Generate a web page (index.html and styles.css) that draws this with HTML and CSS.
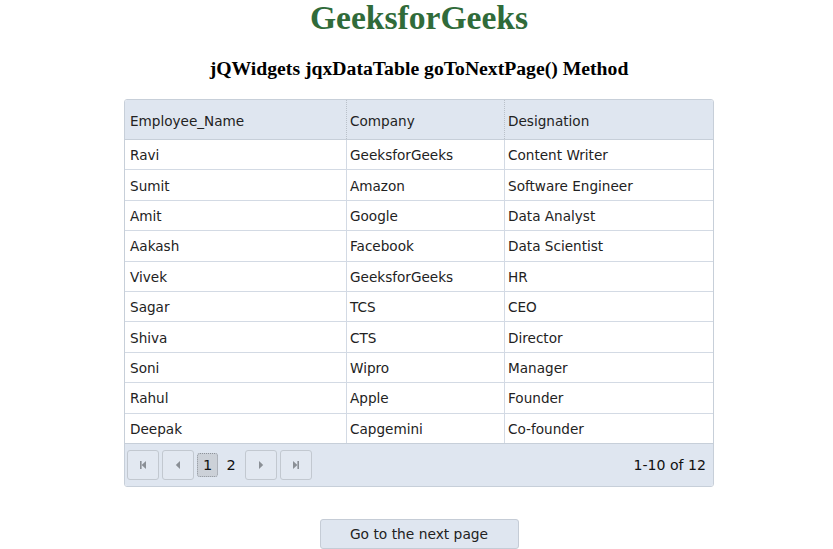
FILE: index.html
```html
<!DOCTYPE html>
<html>
<head>
<meta charset="utf-8">
<title>jqxDataTable goToNextPage</title>
<link rel="stylesheet" href="styles.css">
</head>
<body>
<h1 class="title">GeeksforGeeks</h1>
<h3 class="subtitle">jQWidgets jqxDataTable goToNextPage() Method</h3>
<div class="grid">
  <table class="data">
    <thead>
      <tr><th class="c1">Employee_Name</th><th class="c2">Company</th><th class="c3">Designation</th></tr>
    </thead>
    <tbody>
      <tr><td>Ravi</td><td>GeeksforGeeks</td><td>Content Writer</td></tr>
      <tr><td>Sumit</td><td>Amazon</td><td>Software Engineer</td></tr>
      <tr><td>Amit</td><td>Google</td><td>Data Analyst</td></tr>
      <tr><td>Aakash</td><td>Facebook</td><td>Data Scientist</td></tr>
      <tr><td>Vivek</td><td>GeeksforGeeks</td><td>HR</td></tr>
      <tr><td>Sagar</td><td>TCS</td><td>CEO</td></tr>
      <tr><td>Shiva</td><td>CTS</td><td>Director</td></tr>
      <tr><td>Soni</td><td>Wipro</td><td>Manager</td></tr>
      <tr><td>Rahul</td><td>Apple</td><td>Founder</td></tr>
      <tr><td>Deepak</td><td>Capgemini</td><td>Co-founder</td></tr>
    </tbody>
  </table>
  <div class="pager">
    <div class="pager-left">
      <span class="pbtn"><svg width="8" height="8" viewBox="0 0 8 8"><rect x="1" y="0" width="1.6" height="8" fill="#8a8f96"/><path d="M7 0 L2.6 4 L7 8 Z" fill="#8a8f96"/></svg></span>
      <span class="pbtn"><svg width="8" height="8" viewBox="0 0 8 8"><path d="M6 0 L1.8 4 L6 8 Z" fill="#8a8f96"/></svg></span>
      <span class="pnum active">1</span>
      <span class="pnum">2</span>
      <span class="pbtn after"><svg width="8" height="8" viewBox="0 0 8 8"><path d="M2 0 L6.2 4 L2 8 Z" fill="#8a8f96"/></svg></span>
      <span class="pbtn"><svg width="8" height="8" viewBox="0 0 8 8"><path d="M1 0 L5.4 4 L1 8 Z" fill="#8a8f96"/><rect x="5.4" y="0" width="1.6" height="8" fill="#8a8f96"/></svg></span>
    </div>
    <div class="pager-info">1-10 of 12</div>
  </div>
</div>
<div class="actions">
  <button class="next-btn" type="button">Go to the next page</button>
</div>
</body>
</html>
```

FILE: styles.css
```css
html, body {
  margin: 0;
  padding: 0;
  background: #ffffff;
}
body {
  padding-left: 5px;
}
.title {
  margin: 0;
  text-align: center;
  font-family: "Liberation Serif", "Times New Roman", serif;
  font-size: 33.6px;
  line-height: 36px;
  font-weight: bold;
  color: #306b3a;
}
.subtitle {
  margin: 21px 0 20px 0;
  text-align: center;
  font-family: "Liberation Serif", "Times New Roman", serif;
  font-size: 19.7px;
  line-height: 22px;
  font-weight: bold;
  color: #000;
}
.grid {
  width: 590px;
  box-sizing: border-box;
  margin: 0 auto;
  border: 1px solid #c7cfd9;
  border-radius: 3px;
  overflow: hidden;
  font-family: "DejaVu Sans", Verdana, sans-serif;
  font-size: 13.6px;
  color: #222;
}
.data {
  width: 100%;
  border-collapse: collapse;
  table-layout: fixed;
}
.data th {
  background: #dfe6f0;
  font-weight: normal;
  text-align: left;
  height: 37px;
  padding: 2px 0 0 3px;
  border-bottom: 1px solid #c7cfd9;
  border-left: 1px dotted #b9c0c9;
  color: #222;
}
.data th:first-child, .data td:first-child {
  border-left: none;
  padding-left: 5px;
}
.data .c1 { width: 216px; }
.data .c2 { width: 154px; }
.data td {
  height: 28.4px;
  padding: 1px 0 0 3px;
  border-top: 1px solid #d3dae4;
  border-left: 1px solid #d3dae4;
  background: #fff;
  white-space: nowrap;
}
.data tbody tr:first-child td {
  border-top: none;
}
.pager {
  display: flex;
  align-items: center;
  justify-content: space-between;
  height: 42px;
  background: #dfe6f0;
  border-top: 1px solid #c7cfd9;
  padding: 0 7px 0 2px;
}
.pager-left {
  display: flex;
  align-items: center;
}
.pbtn {
  display: flex;
  align-items: center;
  justify-content: center;
  width: 30px;
  height: 28px;
  border: 1px solid #c2c8d0;
  border-radius: 3px;
  background: #e2e8f1;
  margin-right: 3px;
}
.pnum {
  display: flex;
  align-items: center;
  justify-content: center;
  width: 16px;
  height: 22px;
  margin-left: 5px;
  font-size: 14.5px;
  color: #111;
}
.pnum.active {
  width: 19px;
  margin-left: 0;
  margin-right: 0;
  background: #ccd1d8;
  border: 1px dotted #8d939b;
  border-radius: 3px;
}
.pbtn.after {
  margin-left: 6px;
}
.pager-info {
  font-size: 14.1px;
  color: #111;
}
.actions {
  display: flex;
  justify-content: center;
  margin-top: 32px;
}
.next-btn {
  width: 199px;
  height: 30px;
  background: #dfe6f0;
  border: 1px solid #c5ccd6;
  border-radius: 3px;
  font-family: "DejaVu Sans", Verdana, sans-serif;
  font-size: 13.8px;
  color: #222;
  padding: 0;
}
```
